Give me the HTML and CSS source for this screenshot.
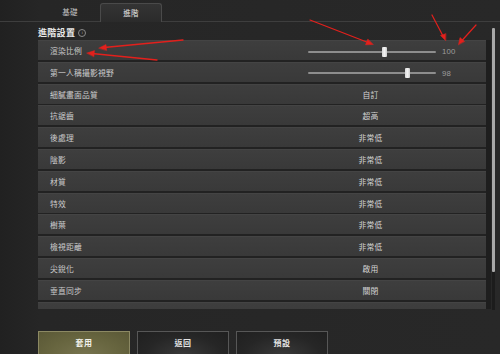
FILE: index.html
```html
<!DOCTYPE html>
<html lang="zh-Hant">
<head>
<meta charset="utf-8">
<link rel="stylesheet" href="styles.css">
</head>
<body>
<div class="page">
  <div class="tabs">
    <div class="tab">基礎</div>
    <div class="tab active">進階</div>
  </div>
  <div class="main">
    <div class="panel">
      <div class="title">進階設置<span class="info">i</span></div>
      <div class="list">
        <div class="row">
          <div class="label">渲染比例</div>
          <div class="control slider-ctl">
            <div class="track"><div class="thumb" style="left:60%"></div></div>
            <div class="num">100</div>
          </div>
        </div>
        <div class="row">
          <div class="label">第一人稱攝影視野</div>
          <div class="control slider-ctl">
            <div class="track"><div class="thumb" style="left:78%"></div></div>
            <div class="num">98</div>
          </div>
        </div>
        <div class="row"><div class="label">細膩畫面品質</div><div class="control value">自訂</div></div>
        <div class="row"><div class="label">抗鋸齒</div><div class="control value">超高</div></div>
        <div class="row"><div class="label">後處理</div><div class="control value">非常低</div></div>
        <div class="row"><div class="label">陰影</div><div class="control value">非常低</div></div>
        <div class="row"><div class="label">材質</div><div class="control value">非常低</div></div>
        <div class="row"><div class="label">特效</div><div class="control value">非常低</div></div>
        <div class="row"><div class="label">樹葉</div><div class="control value">非常低</div></div>
        <div class="row"><div class="label">檢視距離</div><div class="control value">非常低</div></div>
        <div class="row"><div class="label">尖銳化</div><div class="control value">啟用</div></div>
        <div class="row"><div class="label">垂直同步</div><div class="control value">關閉</div></div>
        <div class="row"></div>
      </div>
    </div>
    <div class="scrollbar"><div class="scroll-thumb"></div></div>
  </div>
  <div class="buttons">
    <div class="btn primary">套用</div>
    <div class="btn">返回</div>
    <div class="btn">預設</div>
  </div>
  <svg class="arrows" width="500" height="354" viewBox="0 0 500 354">
    <g fill="#e3201c" stroke="#e3201c" stroke-linecap="round">
      <line x1="183" y1="40" x2="104" y2="47.5" stroke-width="1.3"/>
      <polygon points="99,48 106,44.5 106.6,50.3" stroke-width="0.5"/>
      <line x1="157" y1="60" x2="92" y2="53.5" stroke-width="1.3"/>
      <polygon points="87,53 94.5,50.6 93.9,56.5" stroke-width="0.5"/>
      <line x1="310" y1="20" x2="368" y2="42.5" stroke-width="1.2"/>
      <polygon points="373,44.5 365.5,44.8 367.7,39.3" stroke-width="0.5"/>
      <line x1="432" y1="15" x2="443" y2="36" stroke-width="1.2"/>
      <polygon points="445.5,40.5 440.5,35.5 445.6,33.7" stroke-width="0.5"/>
      <line x1="476" y1="25" x2="462" y2="40.5" stroke-width="1.2"/>
      <polygon points="458.5,44.5 460,37.5 464.4,41.3" stroke-width="0.5"/>
    </g>
  </svg>
</div>
</body>
</html>
```

FILE: styles.css
```css
* { box-sizing: border-box; }
html, body {
  margin: 0;
  padding: 0;
  background: #262626;
}
body {
  width: 500px;
  height: 354px;
  overflow: hidden;
  font-family: "Noto Sans CJK TC", "Noto Sans", "Liberation Sans", sans-serif;
  color: #cfcfcf;
}
.page {
  position: relative;
  width: 500px;
  height: 354px;
  background: linear-gradient(to right, #212121 0, #262626 40px, #282828 100%);
}
.tabs {
  height: 22px;
  display: flex;
  align-items: flex-end;
  padding-left: 40px;
  border-bottom: 1px solid #3e3e3e;
}
.tab {
  width: 60px;
  height: 18px;
  line-height: 17px;
  text-align: center;
  font-size: 7.5px;
  color: #c4c4c4;
  letter-spacing: 0.3px;
}
.tab.active {
  width: 62px;
  background: linear-gradient(to bottom, #343434, #2b2b2b);
  border: 1px solid #4a4a4a;
  border-bottom: none;
  border-radius: 3px 3px 0 0;
  color: #e2e2e2;
  margin-bottom: -1px;
  height: 19px;
}
.main {
  display: flex;
  align-items: flex-start;
  height: 287px;
}
.panel {
  margin-left: 38px;
  width: 453px;
  display: flex;
  flex-direction: column;
}
.title {
  height: 18px;
  padding-top: 4px;
  line-height: 14px;
  font-size: 9px;
  font-weight: bold;
  color: #e8e8e8;
  letter-spacing: 0.3px;
  display: flex;
  align-items: center;
}
.info {
  display: inline-block;
  width: 8px;
  height: 8px;
  margin-left: 3px;
  border: 1px solid #8a8a8a;
  border-radius: 50%;
  font-size: 5px;
  line-height: 6px;
  text-align: center;
  color: #9a9a9a;
  font-weight: normal;
  letter-spacing: 0;
  font-family: "Liberation Serif", serif;
}
.list {
  height: 269px;
  overflow: hidden;
  display: flex;
  flex-direction: column;
  gap: 1.8px;
  border-right: 5px solid #1e1e1e;
  background: #222;
}
.row {
  flex: 0 0 20px;
  height: 20px;
  display: flex;
  align-items: center;
  background: linear-gradient(to bottom, #3e3e3e, #393939);
  border-top: 1px solid #444;
}
.label {
  width: 222px;
  padding-left: 12px;
  font-size: 7.8px;
  color: #cbcbcb;
  letter-spacing: 0.2px;
}
.control {
  flex: 1;
  font-size: 7.8px;
  letter-spacing: 0.2px;
}
.value {
  text-align: center;
  color: #d4d4d4;
  padding-right: 5px;
}
.slider-ctl {
  display: flex;
  align-items: center;
  padding-left: 48px;
}
.track {
  position: relative;
  width: 128px;
  height: 2px;
  background: #8e8e8e;
  border-radius: 1px;
  margin-top: 2px;
}
.thumb {
  position: absolute;
  top: -4px;
  width: 5px;
  height: 10px;
  margin-left: -2.5px;
  background: linear-gradient(to right, #d8d8d8, #f2f2f2, #cfcfcf);
  border-radius: 1px;
}
.num {
  margin-left: 6px;
  color: #9c9c9c;
  font-size: 7.8px;
  margin-top: 2px;
  font-family: "Liberation Sans", sans-serif;
}
.scrollbar {
  margin-left: 1px;
  margin-top: 6px;
  width: 3px;
  height: 282px;
  background: #1c1c1c;
}
.scroll-thumb {
  height: 244px;
  background: #a8a8a8;
  border-radius: 1px;
}
.buttons {
  display: flex;
  gap: 7px;
  padding-left: 38px;
  margin-top: 22px;
}
.btn {
  width: 92px;
  height: 26px;
  line-height: 22px;
  text-align: center;
  font-size: 8px;
  font-weight: bold;
  color: #e4e4e4;
  letter-spacing: 0.5px;
  border: 1px solid #575757;
  background: radial-gradient(ellipse at 50% 100%, #3a3a3a 0%, #262626 60%, #202020 100%);
}
.btn.primary {
  border-color: #8c8963;
  background: radial-gradient(ellipse at 50% 100%, #77744f 0%, #67653f 55%, #5a5836 100%);
  color: #f1f1ea;
}
.arrows {
  position: absolute;
  left: 0;
  top: 0;
  pointer-events: none;
}
```
